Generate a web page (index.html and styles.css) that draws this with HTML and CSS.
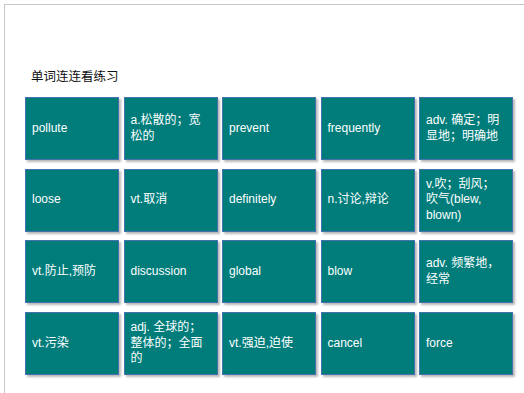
FILE: index.html
```html
<!DOCTYPE html>
<html>
<head>
<meta charset="utf-8">
<link rel="stylesheet" href="styles.css">
</head>
<body>
<div class="slide">
  <div class="title">单词连连看练习</div>
  <div class="grid">
    <div class="cell">pollute</div>
    <div class="cell">a.松散的；宽<br>松的</div>
    <div class="cell">prevent</div>
    <div class="cell">frequently</div>
    <div class="cell">adv. 确定；明<br>显地；明确地</div>

    <div class="cell">loose</div>
    <div class="cell">vt.取消</div>
    <div class="cell">definitely</div>
    <div class="cell">n.讨论,辩论</div>
    <div class="cell">v.吹；刮风；<br>吹气(blew,<br>blown)</div>

    <div class="cell">vt.防止,预防</div>
    <div class="cell">discussion</div>
    <div class="cell">global</div>
    <div class="cell">blow</div>
    <div class="cell">adv. 频繁地，<br>经常</div>

    <div class="cell">vt.污染</div>
    <div class="cell">adj. 全球的；<br>整体的；全面<br>的</div>
    <div class="cell">vt.强迫,迫使</div>
    <div class="cell">cancel</div>
    <div class="cell">force</div>
  </div>
</div>
</body>
</html>
```

FILE: styles.css
```css
html, body {
  margin: 0;
  padding: 0;
  background: #ffffff;
  overflow: hidden;
}
body {
  width: 524px;
  height: 393px;
}
.slide {
  margin: 4px 0 0 4px;
  border-top: 1px solid #c6c6c6;
  border-left: 1px solid #c6c6c6;
  width: 520px;
  height: 389px;
  background: #ffffff;
  box-sizing: border-box;
  padding: 63px 0 0 20px;
  font-family: "Liberation Sans", "Noto Sans CJK SC", sans-serif;
}
.title {
  font-family: "Noto Sans CJK SC", sans-serif;
  font-size: 12.5px;
  line-height: 16px;
  color: #111111;
  padding-left: 6px;
  height: 29px;
}
.grid {
  display: grid;
  grid-template-columns: repeat(5, 94px);
  grid-auto-rows: 63px;
  column-gap: 4.5px;
  row-gap: 8.7px;
}
.cell {
  background: #007d7b;
  border: 1px solid #4473ae;
  box-shadow: 2px 2px 2px rgba(0, 0, 0, 0.28);
  box-sizing: border-box;
  color: #ffffff;
  font-size: 12px;
  line-height: 15.5px;
  display: flex;
  align-items: center;
  padding: 0 4px 0 6px;
}
```
